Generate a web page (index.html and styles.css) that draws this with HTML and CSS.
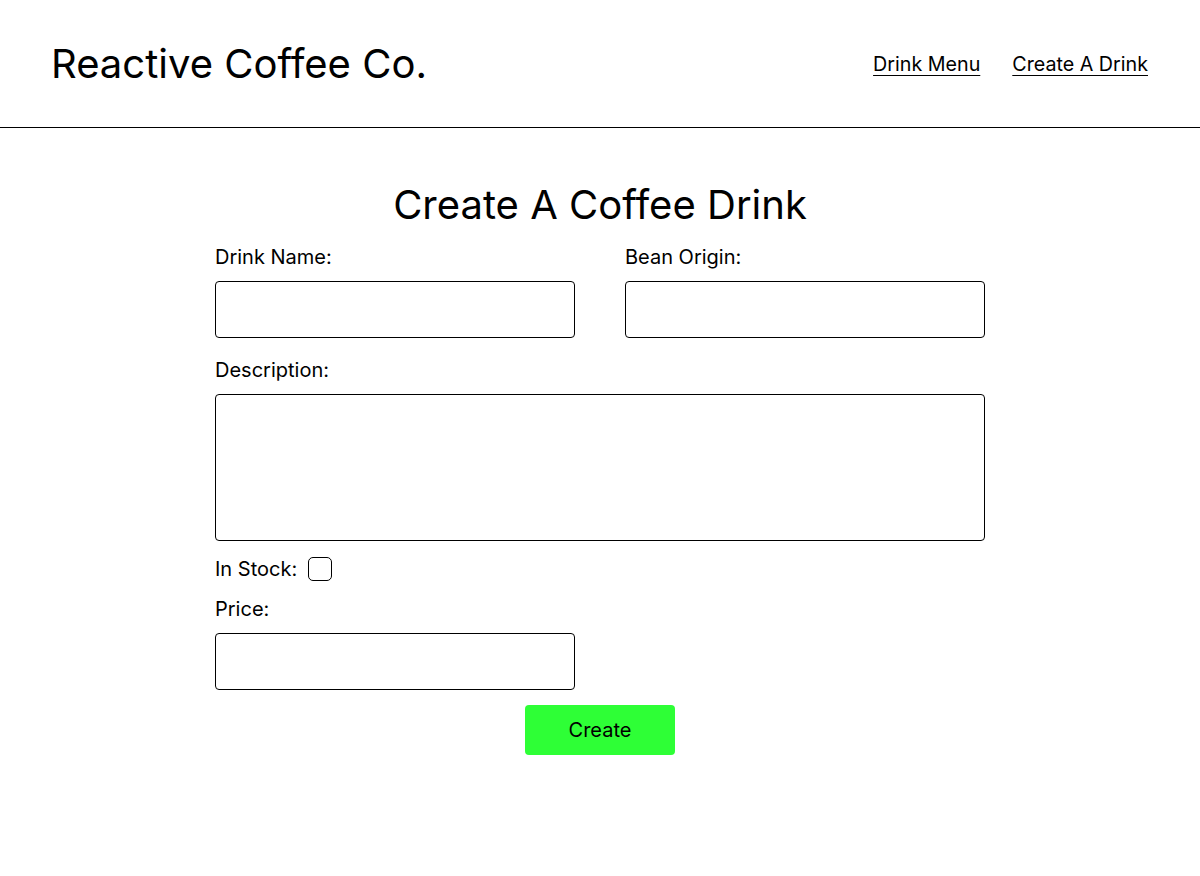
FILE: index.html
```html
<!DOCTYPE html>
<html>
<head>
<meta charset="utf-8">
<link rel="stylesheet" href="styles.css">
</head>
<body>
<header class="site-header">
  <div class="brand">Reactive Coffee Co.</div>
  <nav class="nav">
    <a href="#">Drink Menu</a>
    <a href="#">Create A Drink</a>
  </nav>
</header>
<main class="main">
  <h1 class="page-title">Create A Coffee Drink</h1>
  <form class="drink-form">
    <div class="row two">
      <div class="field">
        <label>Drink Name:</label>
        <input type="text" class="text-input">
      </div>
      <div class="field">
        <label>Bean Origin:</label>
        <input type="text" class="text-input">
      </div>
    </div>
    <div class="field">
      <label>Description:</label>
      <textarea class="text-area"></textarea>
    </div>
    <div class="check-row">
      <label>In Stock:</label>
      <span class="checkbox"></span>
    </div>
    <div class="row two">
      <div class="field">
        <label>Price:</label>
        <input type="text" class="text-input price-input">
      </div>
    </div>
    <div class="actions">
      <button type="button" class="create-btn">Create</button>
    </div>
  </form>
</main>
</body>
</html>
```

FILE: styles.css
```css
* { box-sizing: border-box; }
html, body { margin: 0; padding: 0; background: #fff; }
body { font-family: Inter, "Noto Sans", sans-serif; color: #000; }

.site-header {
  height: 128px;
  border-bottom: 1px solid #000;
  display: flex;
  align-items: center;
  justify-content: space-between;
  padding: 0 52px 0 51px;
}
.brand { font-size: 40px; font-weight: 400; line-height: 1; }
.nav { display: flex; gap: 32px; }
.nav a { color: #000; font-size: 19.7px; text-decoration: underline; text-underline-offset: 4px; text-decoration-thickness: 1px; }

.main { width: 770px; margin: 0 auto; padding-top: 53px; }
.page-title { font-size: 40px; font-weight: 400; text-align: center; margin: 0 0 16px; line-height: 48px; }

.drink-form { display: flex; flex-direction: column; }
.row.two { display: grid; grid-template-columns: 360px 360px; column-gap: 50px; }
.field { display: flex; flex-direction: column; }
.field label { font-size: 20px; line-height: 24px; margin-bottom: 12px; }
.text-input {
  height: 57px; border: 1px solid #000; border-radius: 4px; margin: 0 0 20px;
  font: inherit; background: #fff;
}
.price-input { margin-bottom: 15px; }
.text-area {
  height: 147px; border: 1px solid #000; border-radius: 4px; resize: none; margin: 0 0 16px;
  font: inherit;
}
.check-row { display: flex; align-items: center; gap: 11px; height: 24px; margin-bottom: 16px; }
.check-row label { font-size: 20px; line-height: 24px; }
.checkbox { width: 24px; height: 24px; border: 1px solid #000; border-radius: 5px; display: inline-block; }

.actions { display: flex; justify-content: center; }
.create-btn {
  width: 150px; height: 50px; background: #2eff36; border: none; border-radius: 4px;
  font-family: inherit; font-size: 20px; color: #000;
}
```
